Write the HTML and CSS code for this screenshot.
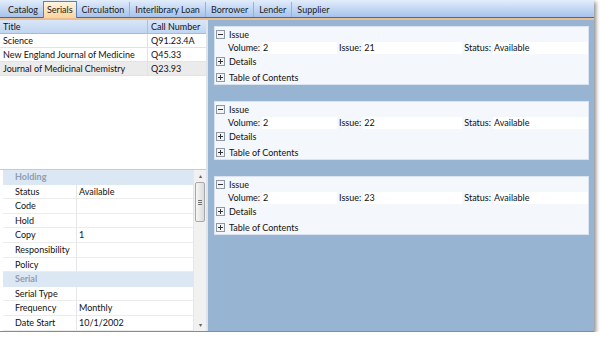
FILE: index.html
```html
<!DOCTYPE html>
<html lang="en">
<head>
  <meta charset="UTF-8">
  <title>Serials</title>
  <link rel="stylesheet" href="styles.css">
</head>
<body>
  <div class="window">
    <div class="tabs">
      <div class="tab">Catalog</div>
      <div class="tab active">Serials</div>
      <div class="tab">Circulation</div>
      <div class="tab">Interlibrary Loan</div>
      <div class="tab">Borrower</div>
      <div class="tab">Lender</div>
      <div class="tab last">Supplier</div>
    </div>
    <div class="tab-line"></div>

    <div class="main">
      <div class="left">
        <div class="list">
          <table>
            <thead>
              <tr><th class="col-title">Title</th><th>Call Number</th></tr>
            </thead>
            <tbody>
              <tr><td>Science</td><td>Q91.23.4A</td></tr>
              <tr><td>New England Journal of Medicine</td><td>Q45.33</td></tr>
              <tr class="selected"><td>Journal of Medicinal Chemistry</td><td>Q23.93</td></tr>
            </tbody>
          </table>
        </div>

        <div class="props">
          <div class="props-list">
            <div class="prop-cat">Holding</div>
            <div class="prop"><span class="name">Status</span><span class="value">Available</span></div>
            <div class="prop"><span class="name">Code</span><span class="value"></span></div>
            <div class="prop"><span class="name">Hold</span><span class="value"></span></div>
            <div class="prop"><span class="name">Copy</span><span class="value">1</span></div>
            <div class="prop"><span class="name">Responsibility</span><span class="value"></span></div>
            <div class="prop"><span class="name">Policy</span><span class="value"></span></div>
            <div class="prop-cat">Serial</div>
            <div class="prop"><span class="name">Serial Type</span><span class="value"></span></div>
            <div class="prop"><span class="name">Frequency</span><span class="value">Monthly</span></div>
            <div class="prop"><span class="name">Date Start</span><span class="value">10/1/2002</span></div>
          </div>
          <div class="scrollbar">
            <div class="arrow">&#9652;</div>
            <div class="thumb"><span class="grip"></span></div>
            <div class="track"></div>
            <div class="arrow">&#9662;</div>
          </div>
        </div>
      </div>

      <div class="right">
        <div class="card">
          <div class="row-head">
            <svg class="toggle" width="9" height="9" viewBox="0 0 9 9"><rect x="0.5" y="0.5" width="8" height="8" fill="#f4f4f4" stroke="#8c98a6"/><path d="M2 4.5h5" stroke="#333" stroke-width="1"/></svg>
            <span>Issue</span>
          </div>
          <div class="fields">
            <span class="label">Volume:</span><span class="field f-vol">2</span>
            <span class="label">Issue:</span><span class="field f-issue">21</span>
            <span class="label">Status:</span><span class="field f-status">Available</span>
          </div>
          <div class="row-head tall">
            <svg class="toggle" width="9" height="9" viewBox="0 0 9 9"><rect x="0.5" y="0.5" width="8" height="8" fill="#f4f4f4" stroke="#8c98a6"/><path d="M2 4.5h5M4.5 2v5" stroke="#333" stroke-width="1"/></svg>
            <span>Details</span>
          </div>
          <div class="row-head tall">
            <svg class="toggle" width="9" height="9" viewBox="0 0 9 9"><rect x="0.5" y="0.5" width="8" height="8" fill="#f4f4f4" stroke="#8c98a6"/><path d="M2 4.5h5M4.5 2v5" stroke="#333" stroke-width="1"/></svg>
            <span>Table of Contents</span>
          </div>
        </div>

        <div class="card">
          <div class="row-head">
            <svg class="toggle" width="9" height="9" viewBox="0 0 9 9"><rect x="0.5" y="0.5" width="8" height="8" fill="#f4f4f4" stroke="#8c98a6"/><path d="M2 4.5h5" stroke="#333" stroke-width="1"/></svg>
            <span>Issue</span>
          </div>
          <div class="fields">
            <span class="label">Volume:</span><span class="field f-vol">2</span>
            <span class="label">Issue:</span><span class="field f-issue">22</span>
            <span class="label">Status:</span><span class="field f-status">Available</span>
          </div>
          <div class="row-head tall">
            <svg class="toggle" width="9" height="9" viewBox="0 0 9 9"><rect x="0.5" y="0.5" width="8" height="8" fill="#f4f4f4" stroke="#8c98a6"/><path d="M2 4.5h5M4.5 2v5" stroke="#333" stroke-width="1"/></svg>
            <span>Details</span>
          </div>
          <div class="row-head tall">
            <svg class="toggle" width="9" height="9" viewBox="0 0 9 9"><rect x="0.5" y="0.5" width="8" height="8" fill="#f4f4f4" stroke="#8c98a6"/><path d="M2 4.5h5M4.5 2v5" stroke="#333" stroke-width="1"/></svg>
            <span>Table of Contents</span>
          </div>
        </div>

        <div class="card">
          <div class="row-head">
            <svg class="toggle" width="9" height="9" viewBox="0 0 9 9"><rect x="0.5" y="0.5" width="8" height="8" fill="#f4f4f4" stroke="#8c98a6"/><path d="M2 4.5h5" stroke="#333" stroke-width="1"/></svg>
            <span>Issue</span>
          </div>
          <div class="fields">
            <span class="label">Volume:</span><span class="field f-vol">2</span>
            <span class="label">Issue:</span><span class="field f-issue">23</span>
            <span class="label">Status:</span><span class="field f-status">Available</span>
          </div>
          <div class="row-head tall">
            <svg class="toggle" width="9" height="9" viewBox="0 0 9 9"><rect x="0.5" y="0.5" width="8" height="8" fill="#f4f4f4" stroke="#8c98a6"/><path d="M2 4.5h5M4.5 2v5" stroke="#333" stroke-width="1"/></svg>
            <span>Details</span>
          </div>
          <div class="row-head tall">
            <svg class="toggle" width="9" height="9" viewBox="0 0 9 9"><rect x="0.5" y="0.5" width="8" height="8" fill="#f4f4f4" stroke="#8c98a6"/><path d="M2 4.5h5M4.5 2v5" stroke="#333" stroke-width="1"/></svg>
            <span>Table of Contents</span>
          </div>
        </div>
      </div>
    </div>
  </div>
</body>
</html>
```

FILE: styles.css
```css
body {
  margin: 0;
  background: #fff;
  font-family: Lato, 'Liberation Sans', sans-serif;
  font-size: 9px;
  color: #111;
}
.window {
  width: 594px;
  height: 332px;
  display: flex;
  flex-direction: column;
  box-sizing: border-box;
  border-bottom: 1px solid #8a8a8a;
  box-shadow: 2px 2px 4px rgba(0, 0, 0, 0.45);
}
.tabs {
  height: 17px;
  display: flex;
  align-items: flex-end;
  padding-left: 3px;
  background: linear-gradient(#e2edfb, #a6c3ed);
  border-bottom: 1px solid #3e66b9;
}
.tab {
  height: 15px;
  line-height: 15px;
  padding: 0 5px;
  border-right: 1px solid #94b1dc;
  color: #1b1b1b;
}
.tab.active {
  height: 16px;
  margin-bottom: -1px;
  margin-left: -1px;
  background: linear-gradient(#fff5e2, #fcd39a);
  border: 1px solid #5a7fc4;
  border-bottom: none;
  padding: 0 3px;
}
.tab.last {
  border-right: none;
}
.tab-line {
  height: 2px;
  background: #ebbd93;
}
.main {
  flex: 1;
  display: flex;
  min-height: 0;
}
.left {
  width: 206px;
  display: flex;
  flex-direction: column;
  background: #fff;
  border-right: 2px solid #dfe4ea;
}
.list {
  height: 149px;
  border-bottom: 1px solid #c8ccd2;
}
table {
  width: 100%;
  border-collapse: collapse;
}
th, td {
  height: 13px;
  padding: 0 3px;
  text-align: left;
  font-weight: normal;
  white-space: nowrap;
}
th {
  background: linear-gradient(#d9e6f8, #c0d5f1);
  border-bottom: 1px solid #a3bbdd;
}
.col-title {
  width: 141px;
  border-right: 1px solid #a9bfdf;
}
td {
  border-bottom: 1px solid #e3e3e3;
}
td:first-child {
  border-right: 1px solid #e3e3e3;
}
.selected td {
  background: #ebebeb;
}
.props {
  flex: 1;
  display: flex;
  min-height: 0;
}
.props-list {
  flex: 1;
  padding-left: 3px;
}
.prop-cat {
  height: 14.6px;
  line-height: 14.6px;
  padding-left: 12px;
  background: #dce7f4;
  color: #8e9db1;
  font-weight: bold;
}
.prop {
  display: flex;
  height: 14.6px;
  line-height: 14px;
  box-sizing: border-box;
  border-bottom: 1px solid #ececec;
}
.prop .name {
  width: 61px;
  padding-left: 12px;
  border-right: 1px solid #e6e6e6;
}
.prop .value {
  padding-left: 2px;
}
.scrollbar {
  width: 12px;
  display: flex;
  flex-direction: column;
  align-items: center;
  background: #f1f1f1;
  border-left: 1px solid #e6e6e6;
}
.arrow {
  height: 12px;
  line-height: 12px;
  font-size: 6px;
  color: #606060;
}
.thumb {
  width: 8px;
  height: 38px;
  display: flex;
  align-items: center;
  justify-content: center;
  background: linear-gradient(to right, #f6f6f6, #dcdcdc);
  border: 1px solid #a8a8a8;
  border-radius: 2px;
}
.grip {
  width: 4px;
  height: 5px;
  background: repeating-linear-gradient(#6f6f6f 0 1px, transparent 1px 2px);
}
.track {
  flex: 1;
}
.right {
  flex: 1;
  display: flex;
  flex-direction: column;
  gap: 16px;
  padding: 6px 5px 0 6px;
  background: #98b4d3;
}
.card {
  height: 59px;
  box-sizing: border-box;
  background: #f4f7fb;
  border: 1px solid #dae3ef;
}
.row-head {
  height: 15px;
  display: flex;
  align-items: center;
  gap: 4px;
  padding-left: 1px;
}
.row-head.tall {
  height: 15.5px;
}
.toggle {
  display: block;
}
.fields {
  height: 12px;
  display: flex;
  line-height: 12px;
  padding-left: 13px;
}
.label {
  padding-right: 2px;
}
.field {
  background: #fff;
  padding-left: 1px;
}
.f-vol {
  width: 74px;
  margin-right: 2px;
}
.f-issue {
  width: 98px;
  margin-right: 2px;
}
.f-status {
  flex: 1;
}
```
